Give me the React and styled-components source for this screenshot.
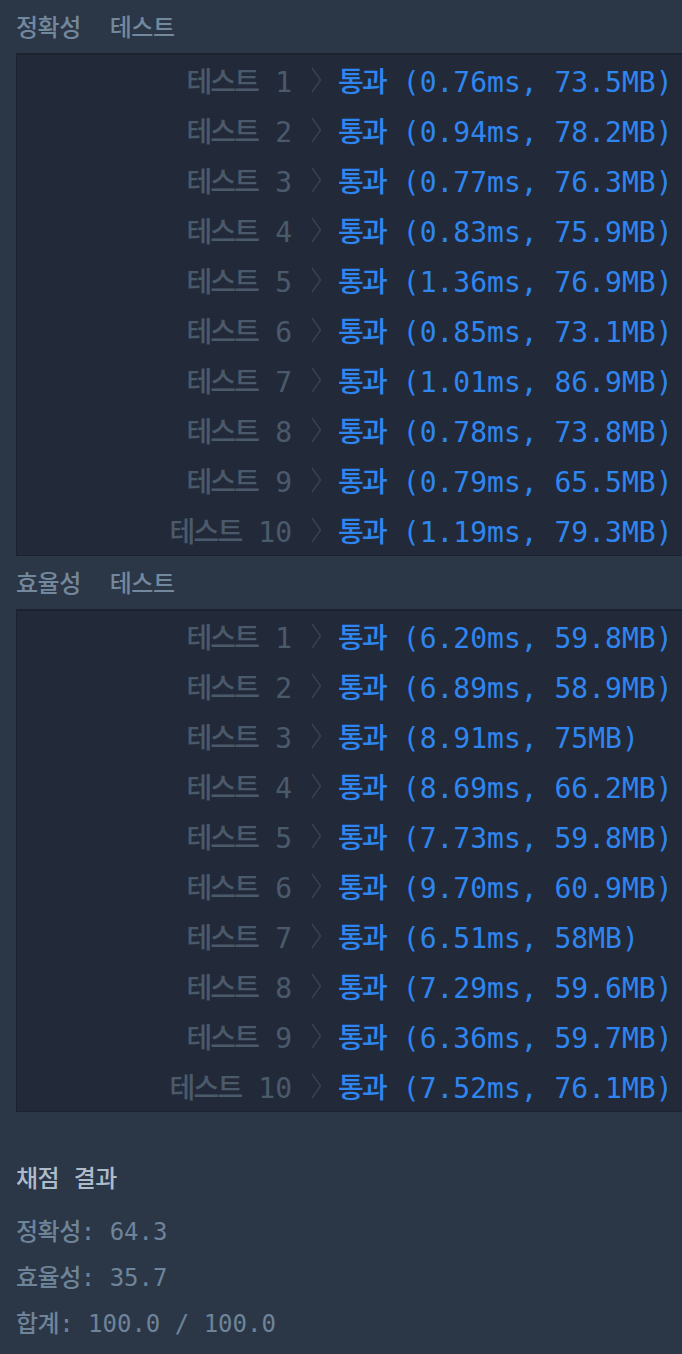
import React from "react";
import styled, { createGlobalStyle } from "styled-components";

const Global = createGlobalStyle`
  html, body { margin: 0; padding: 0; background: #2b3647; overflow: hidden; }
  body { font-family: "DejaVu Sans Mono", "Noto Sans CJK KR", monospace; }
`;

const Page = styled.div`
  width: 682px;
  min-height: 1354px;
  background: #2b3647;
  padding-left: 16px;
  box-sizing: border-box;
`;

const GroupHeader = styled.div`
  height: 53px;
  padding-bottom: 3px;
  box-sizing: border-box;
  display: flex;
  align-items: center;
  gap: 29px;
  font-size: 24px;
  color: #73889c;
`;

const Ko = styled.span`
  font-family: "Noto Sans CJK KR", sans-serif;
  font-size: ${(p) => p.$fs || "24px"};
  letter-spacing: ${(p) => p.$ls || "-0.5px"};
  font-weight: ${(p) => p.$fw || 500};
`;

const Box = styled.div`
  background: #222a3a;
  border: 1px solid #1c2330;
  border-top-width: 2px;
  border-right: none;
  display: flex;
  flex-direction: column;
`;

const Row = styled.div`
  height: 50px;
  display: grid;
  grid-template-columns: 1fr 46px 344px;
  align-items: center;
  font-size: 28px;
  white-space: pre;
`;

const Label = styled.div`
  text-align: right;
  color: #4b5a6b;
`;

const Chevron = styled.div`
  padding-left: 19px;
  display: flex;
  align-items: center;
`;

const Result = styled.div`
  color: #2f86f0;
`;

const Summary = styled.div`
  padding-top: 42px;
  font-size: 24px;
`;

const SummaryTitle = styled.div`
  height: 46px;
  line-height: 46px;
  color: #aebcca;
  margin-bottom: 7px;
  white-space: pre;
`;

const SummaryLine = styled.div`
  height: 46px;
  line-height: 46px;
  color: #6e8498;
  white-space: pre;
`;

const accuracy = [
  ["0.76", "73.5"],
  ["0.94", "78.2"],
  ["0.77", "76.3"],
  ["0.83", "75.9"],
  ["1.36", "76.9"],
  ["0.85", "73.1"],
  ["1.01", "86.9"],
  ["0.78", "73.8"],
  ["0.79", "65.5"],
  ["1.19", "79.3"],
];

const efficiency = [
  ["6.20", "59.8"],
  ["6.89", "58.9"],
  ["8.91", "75"],
  ["8.69", "66.2"],
  ["7.73", "59.8"],
  ["9.70", "60.9"],
  ["6.51", "58"],
  ["7.29", "59.6"],
  ["6.36", "59.7"],
  ["7.52", "76.1"],
];

function ChevronIcon() {
  return (
    <svg width="11" height="26" viewBox="0 0 11 26">
      <polyline
        points="1,1 9.5,13 1,25"
        fill="none"
        stroke="#354253"
        strokeWidth="1.6"
      />
    </svg>
  );
}

function TestBox({ items }) {
  return (
    <Box>
      {items.map(([ms, mb], i) => (
        <Row key={i}>
          <Label>
            <Ko $fs="28px" $ls="-1.8px">테스트</Ko> {i + 1}
          </Label>
          <Chevron>
            <ChevronIcon />
          </Chevron>
          <Result>
            <Ko $fs="28px" $ls="-1.8px">통과</Ko> ({ms}ms, {mb}MB)
          </Result>
        </Row>
      ))}
    </Box>
  );
}

export default function App() {
  return (
    <>
      <Global />
      <Page>
        <GroupHeader>
          <Ko>정확성</Ko>
          <Ko>테스트</Ko>
        </GroupHeader>
        <TestBox items={accuracy} />
        <GroupHeader>
          <Ko>효율성</Ko>
          <Ko>테스트</Ko>
        </GroupHeader>
        <TestBox items={efficiency} />
        <Summary>
          <SummaryTitle>
            <Ko>채점</Ko> <Ko>결과</Ko>
          </SummaryTitle>
          <SummaryLine>
            <Ko>정확성</Ko>: 64.3
          </SummaryLine>
          <SummaryLine>
            <Ko>효율성</Ko>: 35.7
          </SummaryLine>
          <SummaryLine>
            <Ko>합계</Ko>: 100.0 / 100.0
          </SummaryLine>
        </Summary>
      </Page>
    </>
  );
}
